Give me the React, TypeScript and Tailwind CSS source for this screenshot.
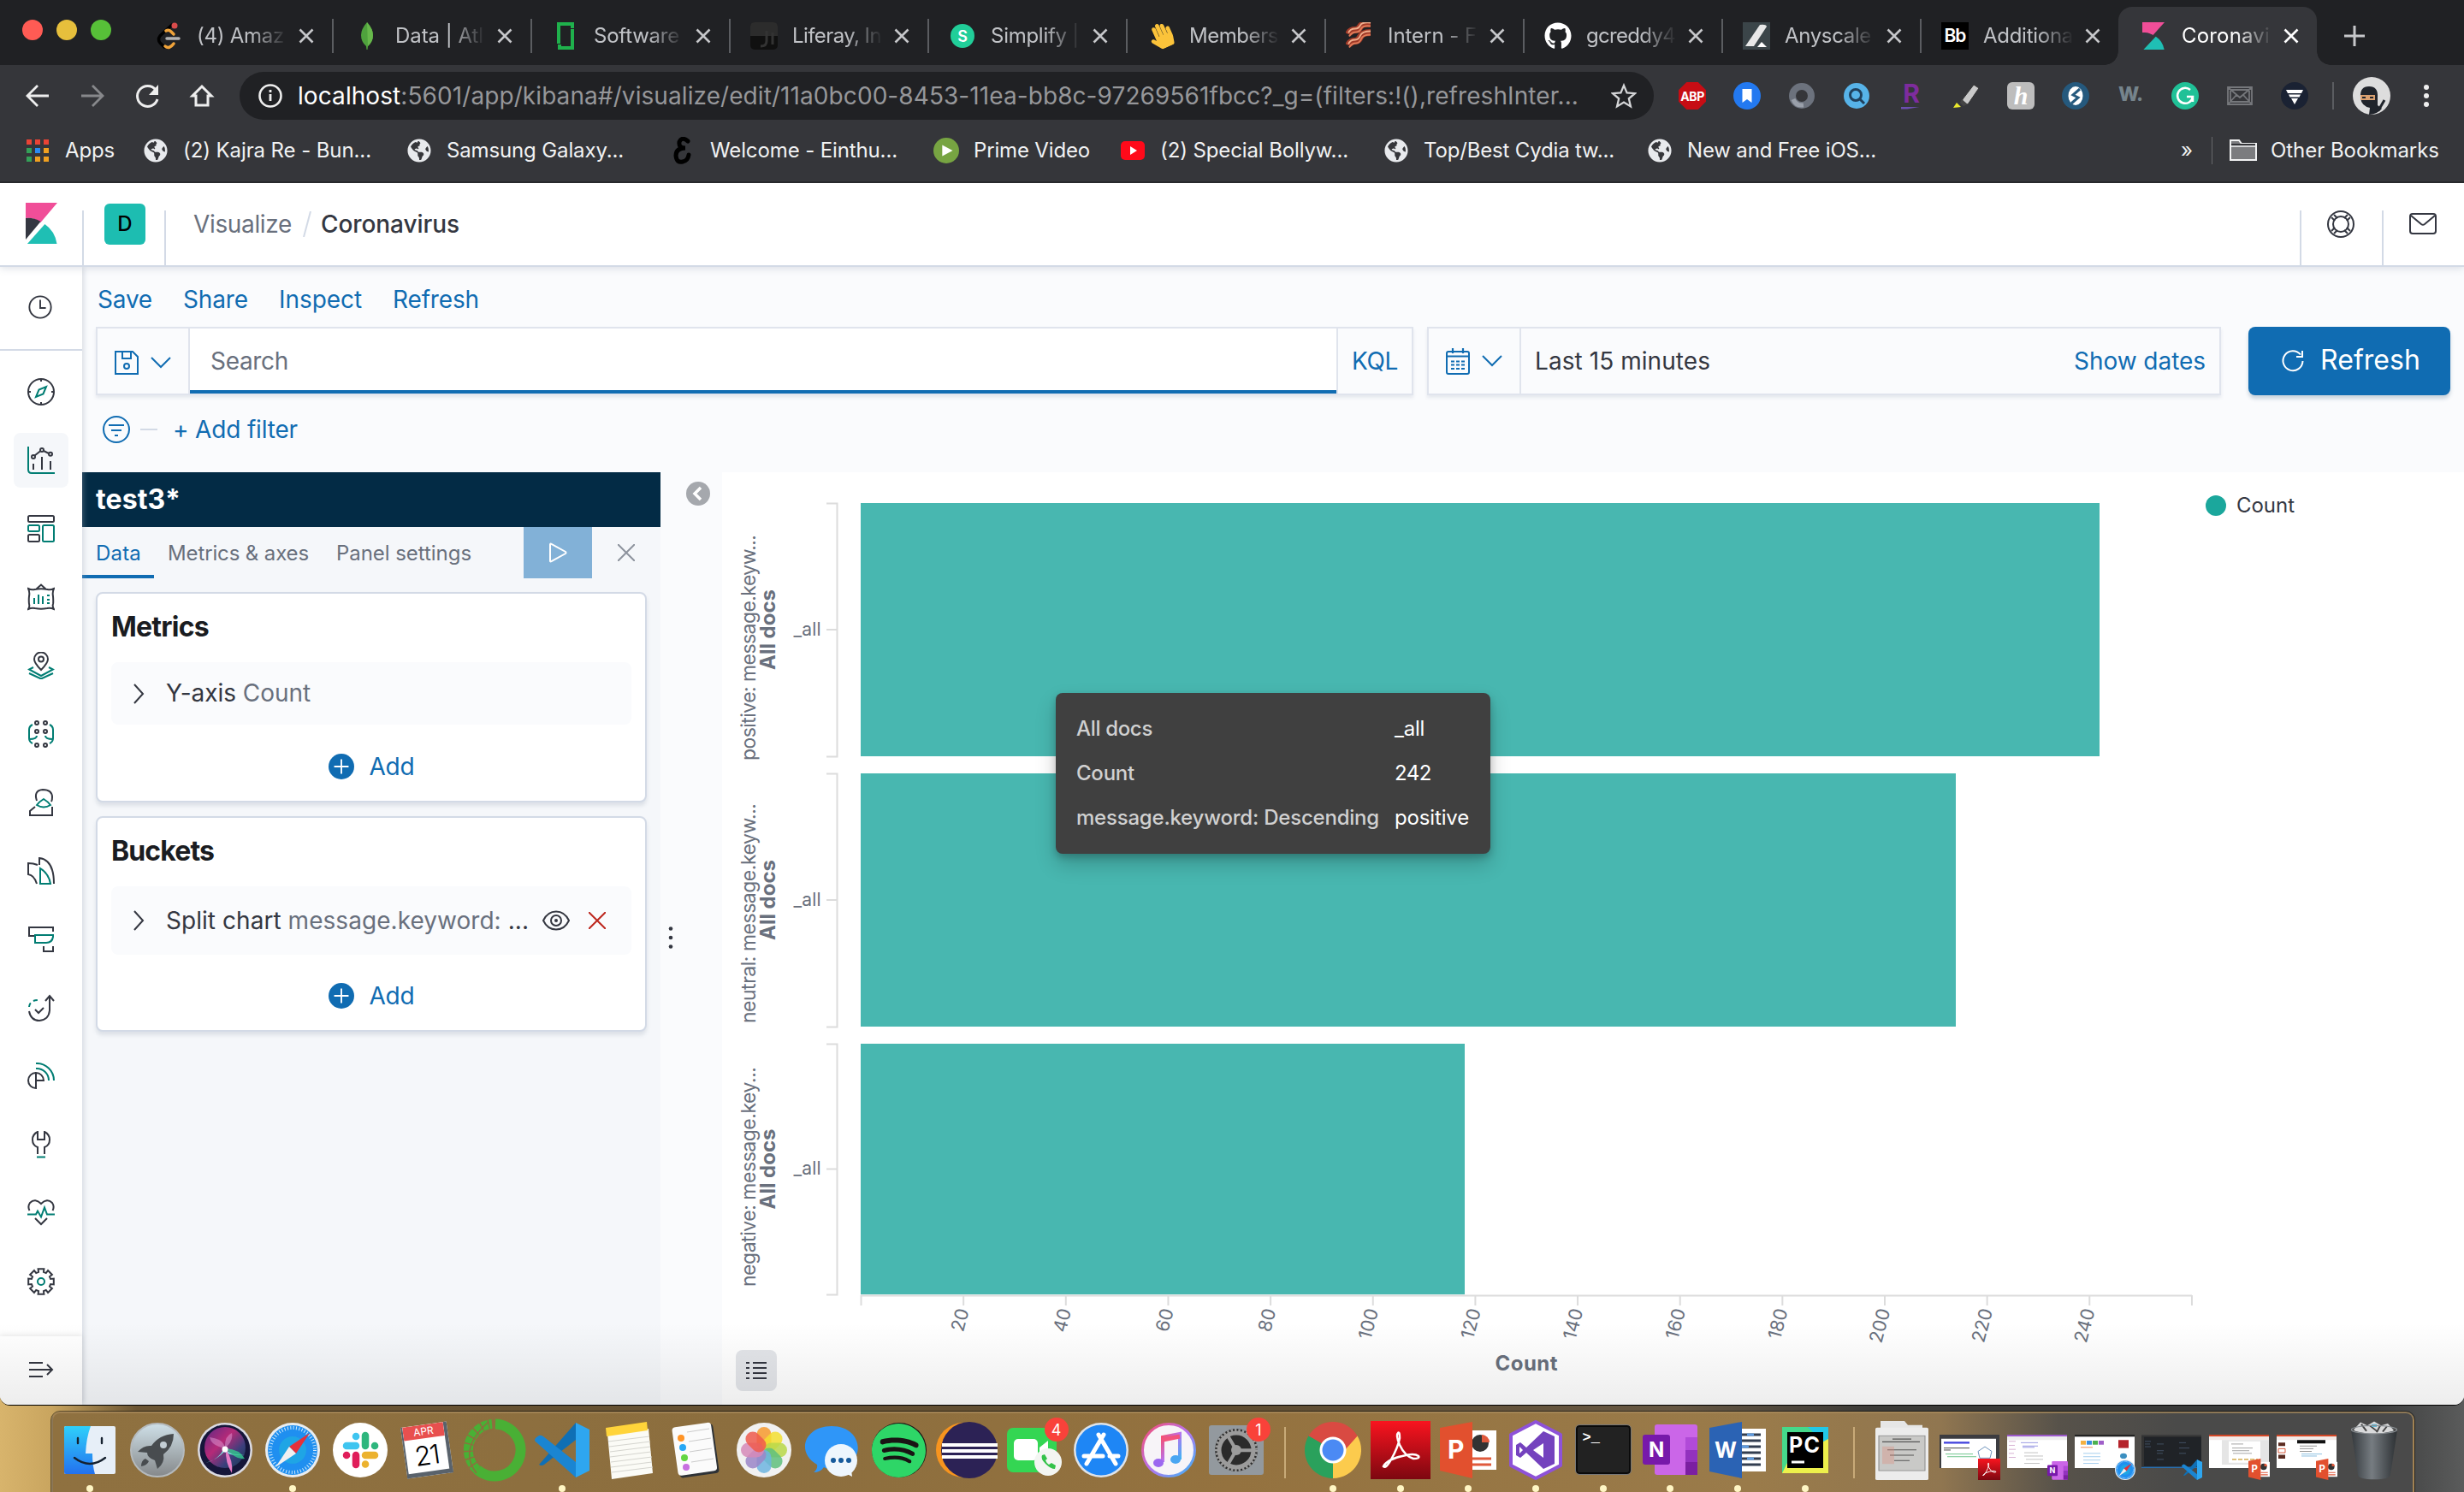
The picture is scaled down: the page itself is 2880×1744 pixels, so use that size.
import React, { useLayoutEffect, useRef, useState } from "react";
import { FaGithub, FaSpotify, FaHandPaper, FaGlobeAmericas } from "react-icons/fa";

type Kids = { children?: React.ReactNode };

/** Single-line label that tracks its letters so that it fills the given width. */
function Fit({ w, className = "", children }: Kids & { w: number; className?: string }) {
  const ref = useRef<HTMLSpanElement>(null);
  const [ls, setLs] = useState(0);
  useLayoutEffect(() => {
    const el = ref.current;
    if (!el) return;
    const n = (el.textContent || "").length || 1;
    setLs((w - el.getBoundingClientRect().width) / n);
  }, [w]);
  return (
    <span ref={ref} className={"inline-block whitespace-pre " + className} style={{ letterSpacing: ls }}>
      {children}
    </span>
  );
}

function Svg({ children, className = "size-8", vb = "0 0 32 32" }: Kids & { className?: string; vb?: string }) {
  return (
    <svg viewBox={vb} preserveAspectRatio="none" className={"shrink-0 " + className} fill="none">
      {children}
    </svg>
  );
}

/* ---------- browser chrome ---------- */

const KibanaMark = ({ className }: { className: string }) => (
  <Svg vb="0 0 38 48" className={className}>
    <path d="M0 0h38L18 23Q9 17 0 18Z" fill="#F04E98" />
    <path d="M0 18q9-1 18 4L0 43Z" fill="#343741" />
    <path d="M23 25Q35 33 37.500 48H2Z" fill="#1FBFB4" />
  </Svg>
);

const favicons: Record<string, React.ReactNode> = {
  leet: (
    <Svg>
      <path d="M20 3 6 16q-3 4 0 8l5 5" stroke="#000" strokeWidth="3.500" strokeLinecap="round" />
      <path d="M13 10q3-2 6 1l3 3M12 28q5 4 10-3" stroke="#F0A33A" strokeWidth="3.500" strokeLinecap="round" />
      <path d="M14 19h14" stroke="#B3B3B3" strokeWidth="3.500" strokeLinecap="round" />
      <circle cx="23" cy="4" r="3.500" fill="#D84B4B" />
    </Svg>
  ),
  mongo: (
    <Svg>
      <path d="M16 0q7 8 7 15 0 8-6 13l-.5 4h-1L15 28q-6-5-6-13 0-7 7-15Z" fill="#4FA23D" />
      <path d="M16 0q7 8 7 15 0 8-6 13Z" fill="#67B84B" />
    </Svg>
  ),
  soft: (
    <Svg>
      <path d="M8 25V2h16v5M24 8v22H9v-4" stroke="#1FB14C" strokeWidth="4" />
    </Svg>
  ),
  liferay: (
    <Svg>
      <rect width="32" height="32" rx="5" fill="#101010" />
      <path d="M0 5q0-5 5-5h22q5 0 5 5v11H0Z" fill="#2c2c2c" />
      <path d="M19 10v12q0 6-7 6M26 12v14" stroke="#333" strokeWidth="3" />
    </Svg>
  ),
  simplify: <div className="flex size-7 items-center justify-center rounded-full bg-[#21CE99] text-[18px] font-semibold text-white">S</div>,
  wave: <FaHandPaper className="h-[30px] w-7 -rotate-[24deg] text-[#FBC33A]" />,
  bacon: (
    <Svg>
      <path d="M3 14q2-5 8-5 4 0 6-4t12-3M3 27q2-5 8-5 4 0 6-5t12-5" stroke="#A03A28" strokeWidth="8" />
      <path d="M3 12.500q2-5 8-5 4 0 6-4t12-3M3 25.500q2-5 8-5 4 0 6-5t12-5" stroke="#F0AE8C" strokeWidth="2" />
      <path d="M4 16.500q3-5 8-5 4 0 6-4t11-3M4 29.500q3-5 8-5 4 0 6-5t11-5" stroke="#E07A58" strokeWidth="2" />
    </Svg>
  ),
  git: <FaGithub className="size-8 text-white" />,
  any: (
    <Svg>
      <rect width="32" height="32" fill="#3B4549" />
      <path d="M3 28 20 3q7-1 8 2L13 28Z" fill="#E8E8E8" />
      <path d="m22 23 6 6H17Z" fill="#fff" />
    </Svg>
  ),
  bb: <div className="flex size-8 items-center justify-center bg-black text-[21px] font-semibold tracking-tighter text-white">Bb</div>,
  kib: <KibanaMark className="h-8 w-[26px]" />,
};

const tabs: [string, string, number][] = [
  ["leet", "(4) Amaz", 102],
  ["mongo", "Data | Atl", 103],
  ["soft", "Software", 100],
  ["liferay", "Liferay, In", 104],
  ["simplify", "Simplify |", 103],
  ["wave", "Members", 104],
  ["bacon", "Intern - F", 104],
  ["git", "gcreddy4", 104],
  ["any", "Anyscale", 101],
  ["bb", "Additiona", 105],
];

const CloseX = ({ className = "text-[#c6c7ca]" }: { className?: string }) => (
  <Svg className={"size-[18px] " + className} vb="0 0 18 18">
    <path d="m1.500 1.500 15 15m0-15-15 15" stroke="currentColor" strokeWidth="2.600" />
  </Svg>
);

function Tab({ icon, title, w, active = false, last = false }: { icon: string; title: string; w: number; active?: boolean; last?: boolean }) {
  return (
    <div
      className={
        "relative flex h-[68px] w-[232px] shrink-0 items-center " +
        (active ? "rounded-t-[16px] bg-[#35363a]" : "")
      }
    >
      {active && (
        <>
          <div className="absolute bottom-0 -left-4 size-4 bg-[radial-gradient(circle_at_0_0,#202124_15.500px,#35363a_16px)]" />
          <div className="absolute -right-4 bottom-0 size-4 bg-[radial-gradient(circle_at_100%_0,#202124_15.500px,#35363a_16px)]" />
        </>
      )}
      <div className="ml-[25px] flex w-8 shrink-0 items-center justify-center">{favicons[icon]}</div>
      <div
        className={
          "ml-[17px] w-[106px] shrink-0 text-[24px] whitespace-nowrap [mask-image:linear-gradient(to_right,black_60%,transparent)] " +
          (active ? "text-white" : "text-[#c0c2c6]")
        }
      >
        <Fit w={w}>{title}</Fit>
      </div>
      <CloseX className={"ml-[13px] " + (active ? "text-white" : "text-[#c6c7ca]")} />
      {!active && !last && <div className="-mr-[2px] ml-auto h-10 w-[2px] bg-[#5b5d61]" />}
    </div>
  );
}

function TabStrip() {
  return (
    <div className="flex h-[76px] items-end bg-[#202124]">
      <div className="mb-[29px] ml-[26px] flex w-[130px] shrink-0 gap-4">
        <div className="size-6 rounded-full bg-[#FF5B54]" />
        <div className="size-6 rounded-full bg-[#E6BF3C]" />
        <div className="size-6 rounded-full bg-[#57C038]" />
      </div>
      {tabs.map(([icon, title, w], i) => (
        <Tab key={icon} icon={icon} title={title} w={w} last={i === tabs.length - 1} />
      ))}
      <Tab icon="kib" title="Coronavi" w={103} active />
      <Svg className="mb-[22px] ml-8 size-6" vb="0 0 24 24">
        <path d="M12 0v24M0 12h24" stroke="#c6c7ca" strokeWidth="3" />
      </Svg>
    </div>
  );
}

const extensions: React.ReactNode[] = [
  <div className="flex size-8 items-center justify-center bg-[#C70D14] text-[14px] font-bold tracking-tight text-white [clip-path:polygon(29%_0,71%_0,100%_29%,100%_71%,71%_100%,29%_100%,0_71%,0_29%)]">ABP</div>,
  <Svg>
    <circle cx="16" cy="16" r="16" fill="#2379F0" />
    <path d="M10.500 8h11v16L16 20l-5.500 4Z" fill="#fff" />
  </Svg>,
  <Svg>
    <circle cx="16" cy="16" r="11" stroke="#6c727d" strokeWidth="8" />
    <path d="M6 20q3 8 12 7" stroke="#9aa0aa" strokeWidth="5" />
  </Svg>,
  <Svg>
    <circle cx="16" cy="16" r="15" fill="#57B3E8" />
    <circle cx="15" cy="15" r="6.500" stroke="#20405c" strokeWidth="3" />
    <path d="m20 20 5 5" stroke="#20405c" strokeWidth="3" />
  </Svg>,
  <div className="flex size-8 flex-col items-center justify-center">
    <span className="text-[30px] leading-[25px] font-bold text-[#7E2C9E]">R</span>
    <span className="mt-[3px] h-[3px] w-6 bg-[#6b4fb0] [clip-path:polygon(0_0,100%_0,30%_100%,0_100%)]" />
  </div>,
  <Svg>
    <path d="M12 20 25 3l6 4-13 19-7-1Z" fill="#c9c9c9" stroke="#333" strokeWidth="1" />
    <path d="m11 20 7 6-5 2-4-4Z" fill="#444" />
    <path d="m1 30 4-6 5 5Z" fill="#E9E82D" />
  </Svg>,
  <div className="flex size-8 items-center justify-center rounded-[6px] bg-[#bdbdbd] font-['Liberation_Serif',serif] text-[30px] leading-none font-bold text-white italic">h</div>,
  <Svg>
    <circle cx="16" cy="16" r="16" fill="#25597d" />
    <ellipse cx="16" cy="16" rx="8.500" ry="11" fill="#fff" />
    <path d="M21 8 13 15l6 3-8 7" stroke="#25597d" strokeWidth="3" />
  </Svg>,
  <span className="mb-1 text-[23px] leading-none font-extrabold tracking-tighter text-[#75848c]">W.</span>,
  <Svg>
    <circle cx="16" cy="16" r="16" fill="#20C197" />
    <path d="M22 9a9 9 0 1 0 3 8h-7M25 17v6" stroke="#fff" strokeWidth="2.500" />
  </Svg>,
  <Svg>
    <path d="M2 6h28v20H2ZM2 6l14 12L30 6M2 26l10-11m18 11L20 15M5 9h22v14H5Z" stroke="#75777b" strokeWidth="1.800" />
  </Svg>,
  <Svg>
    <circle cx="16" cy="16" r="16" fill="#1a2233" />
    <path d="M6 9h20l-2 4H8ZM9 14.500h14l-1.500 3h-11ZM12 19h8l-4 7Z" fill="#fff" />
  </Svg>,
];

function Toolbar() {
  return (
    <div className="flex h-[72px] items-center bg-[#35363a]">
      <Svg className="ml-[28px] size-8">
        <path d="M29 16H4M16 4 4 16l12 12" stroke="#eee" strokeWidth="2.800" />
      </Svg>
      <Svg className="ml-8 size-8">
        <path d="M3 16h25M16 4l12 12-12 12" stroke="#87888b" strokeWidth="2.800" />
      </Svg>
      <Svg className="ml-8 size-8">
        <path d="M26 9a12 12 0 1 0 2 11" stroke="#eee" strokeWidth="3" />
        <path d="M29 3v12H18Z" fill="#eee" />
      </Svg>
      <Svg className="ml-8 size-8">
        <path d="M16 5 5 16h4v11h14V16h4Z" stroke="#eee" strokeWidth="3" />
      </Svg>
      <div className="ml-7 flex h-14 w-[1653px] shrink-0 items-center rounded-full bg-[#202124]">
        <Svg className="ml-[22px] size-[28px]" vb="0 0 28 28">
          <circle cx="14" cy="14" r="12.500" stroke="#eee" strokeWidth="2.600" />
          <path d="M14 12v8M14 7v3" stroke="#eee" strokeWidth="2.800" />
        </Svg>
        <div className="ml-[18px] w-[1497px] text-[28px] text-[#96979a]">
          <Fit w={1497}>
            <span className="text-white">localhost</span>:5601/app/kibana#/visualize/edit/11a0bc00-8453-11ea-bb8c-97269561fbcc?_g=(filters:!(),refreshInter...
          </Fit>
        </div>
        <Svg className="ml-[38px] size-[30px]">
          <path d="m16 3 3.800 9.200 10 .8-7.600 6.500 2.300 9.700L16 24l-8.500 5.200 2.300-9.700L2.200 13l10-.8Z" stroke="#d5d6d8" strokeWidth="2.400" />
        </Svg>
      </div>
      <div className="ml-[29px] flex shrink-0 gap-8">
        {extensions.map((e, i) => (
          <div key={i} className="flex size-8 items-center justify-center">
            {e}
          </div>
        ))}
      </div>
      <div className="ml-[28px] h-8 w-[2px] bg-[#5b5d61]" />
      <Svg className="ml-[22px] size-11" vb="0 0 44 44">
        <circle cx="22" cy="22" r="22" fill="#ddd" />
        <path d="M9 24q-1-13 10-13 11 0 10 13v9l5 4q-6 7-15 7l1-8q-10-2-11-12Z" fill="#20242b" />
        <path d="M9 21h17v6H9Z" fill="#d9a070" />
        <path d="M11 24h4m5 0h4" stroke="#20242b" strokeWidth="2" />
        <path d="m37 27-7 12" stroke="#20242b" strokeWidth="3" />
      </Svg>
      <Svg className="ml-[38px] h-7 w-2" vb="0 0 8 28">
        <g fill="#eee">
          <circle cx="4" cy="4" r="3" />
          <circle cx="4" cy="14" r="3" />
          <circle cx="4" cy="24" r="3" />
        </g>
      </Svg>
    </div>
  );
}

const Globe = () => <FaGlobeAmericas className="size-7 shrink-0 text-[#e8eaed]" />;

const Mark = ({ icon, text, w, className }: { icon: React.ReactNode; text: string; w: number; className: string }) => (
  <div className={"flex shrink-0 items-center " + className}>
    <div className="mr-[18px] flex w-7 justify-center">{icon}</div>
    <Fit w={w}>{text}</Fit>
  </div>
);

function BookmarksBar() {
  const c = ["#EA4335", "#EA4335", "#EA4335", "#34A058", "#2A8BF2", "#F0A020", "#34A058", "#F0A020", "#F0A020"];
  return (
    <div className="flex h-[66px] items-center border-b-2 border-[#28292c] bg-[#35363a] pb-[8px] text-[24px] text-[#f1f2f3]">
      <Svg className="ml-[31px] size-[26px]" vb="0 0 26 26">
        {c.map((f, i) => (
          <rect key={i} x={(i % 3) * 10} y={Math.floor(i / 3) * 10} width="6" height="6" fill={f} />
        ))}
      </Svg>
      <div className="ml-[19px] w-[58px]"><Fit w={58}>Apps</Fit></div>
      <Mark className="ml-[34px]" icon={<Globe />} text="(2) Kajra Re - Bun..." w={220} />
      <Mark className="ml-[42px]" icon={<Globe />} text="Samsung Galaxy..." w={207} />
      <Mark
        className="ml-[55px]"
        icon={
          <Svg className="size-8">
            <path d="M22 5Q15-1 12 6q-1 7 7 7-11 0-11 9 1 9 8 7 6-1 7-8" stroke="#000" strokeWidth="5" strokeLinecap="round" />
          </Svg>
        }
        text="Welcome - Einthu..."
        w={219}
      />
      <Mark
        className="ml-[43px]"
        icon={
          <Svg className="size-[30px]">
            <circle cx="16" cy="16" r="16" fill="#77A442" />
            <path d="m11 9 13 7-13 7Z" fill="#fff" />
          </Svg>
        }
        text="Prime Video"
        w={136}
      />
      <Mark
        className="ml-[36px]"
        icon={
          <Svg className="h-[22px] w-7" vb="0 0 28 22">
            <rect width="28" height="22" rx="5" fill="#FF0A1A" />
            <path d="m11 6 8 5-8 5Z" fill="#fff" />
          </Svg>
        }
        text="(2) Special Bollyw..."
        w={220}
      />
      <Mark className="ml-[42px]" icon={<Globe />} text="Top/Best Cydia tw..." w={223} />
      <Mark className="ml-[39px]" icon={<Globe />} text="New and Free iOS..." w={221} />
      <div className="ml-auto flex items-center">
        <span className="text-[24px]">»</span>
        <div className="ml-[22px] h-8 w-px bg-[#66676a]" />
        <Svg className="ml-5 h-7 w-8" vb="0 0 32 28">
          <path d="M1 2h10l3 4h17v19H1Z" fill="#7b7c7f" stroke="#f1f2f3" strokeWidth="2" />
          <path d="M2 7h28" stroke="#35363a" strokeWidth="2" />
          <path d="M1 9h30" stroke="#f1f2f3" strokeWidth="1.500" />
        </Svg>
        <div className="mr-[29px] ml-4"><Fit w={197}>Other Bookmarks</Fit></div>
      </div>
    </div>
  );
}

/* ---------- Kibana ---------- */

function Header() {
  return (
    <div className="relative z-10 flex h-[98px] shrink-0 items-center border-b-2 border-[#d3dae6] bg-white text-[28px] shadow-[0_2px_8px_rgba(152,162,179,0.3)]">
      <KibanaMark className="mb-[3px] ml-[30px] h-12 w-[37px]" />
      <div className="ml-[29px] h-16 w-[2px] self-end bg-[#d3dae6]" />
      <div className="ml-6 flex size-12 items-center justify-center rounded-[6px] bg-[#1DBDB1] text-[24px] font-medium text-black">D</div>
      <div className="ml-[22px] h-16 w-[2px] self-end bg-[#d3dae6]" />
      <div className="ml-[32px]"><Fit w={115} className="text-[#69707d]">Visualize</Fit></div>
      <Svg className="ml-[12px] h-[30px] w-3" vb="0 0 12 30">
        <path d="M10 0 2 30" stroke="#d3dae6" strokeWidth="2" />
      </Svg>
      <div className="ml-[10px]"><Fit w={162} className="font-medium text-[#343741]">Coronavirus</Fit></div>
      <div className="ml-auto h-16 w-[2px] self-end bg-[#d3dae6]" />
      <Svg className="ml-[30px] size-8">
        <g stroke="#343741" strokeWidth="2">
          <circle cx="16" cy="16" r="15" />
          <circle cx="16" cy="16" r="9" />
          <path d="m5 8 4 4M8 5l4 4M24 5l-4 4m7-1-4 4M5 24l4-4m-1 7 4-4m12 4-4-4m7 1-4-4" />
        </g>
      </Svg>
      <div className="ml-[32px] h-16 w-[2px] self-end bg-[#d3dae6]" />
      <Svg className="mr-8 ml-[30px] h-[26px] w-8" vb="0 0 32 26">
        <g stroke="#343741" strokeWidth="2">
          <rect x="1" y="1" width="30" height="23" rx="3" />
          <path d="m2 3 12 10q2 1.500 4 0L30 3" />
        </g>
      </Svg>
    </div>
  );
}

const D = "#343741";
const G = "#017D73";

const gearPath = Array.from({ length: 8 }, (_, i) => {
  const p = (r: number, deg: number) => {
    const a = ((i * 45 + deg - 90) * Math.PI) / 180;
    return `${(16 + r * Math.cos(a)).toFixed(2)} ${(16 + r * Math.sin(a)).toFixed(2)}`;
  };
  return `${p(11.5, -15)}L${p(15.2, -13)}L${p(15.2, 13)}L${p(11.5, 15)}`;
}).join("L");

const navIcons: React.ReactNode[] = [
  <>
    <circle cx="16" cy="16" r="15" stroke={D} />
    <path d="M16 1v3m0 24v3M1 16h3m24 0h3" stroke={D} />
    <path d="m22 10-3.500 8.500L10 22l3.500-8.500Z" stroke={G} />
  </>,
  <>
    <path d="M1 0v27q0 4 4 4h27" stroke={G} />
    <g stroke={D}>
      <circle cx="7" cy="12" r="2" />
      <circle cx="17" cy="4" r="2" />
      <circle cx="27" cy="8.700" r="2" />
      <path d="m8.500 10.500 7-5.500m3.500 0 6 3M7 20v7m10-15v15m10-10v10" />
    </g>
  </>,
  <>
    <rect x="1" y="1" width="30" height="7" rx="1.500" stroke={D} />
    <rect x="1" y="12" width="13" height="7" rx="1.500" stroke={G} />
    <rect x="1" y="23" width="13" height="8" rx="1.500" stroke={D} />
    <rect x="18" y="12" width="13" height="19" rx="1.500" stroke={G} />
  </>,
  <>
    <path d="m10 7 6-5.500L22 7M1 6q4 2 7.500 1 7.500-1.500 15 0Q27 8 31 6q-2 4-1 9 .5 7 0 9-1 3 1 6-4-2-8-1-7 1.500-14 0-4-1-8 1 2-3 1-6-.5-5 0-9 1-5-1-9Z" stroke={D} />
    <path d="M8 17v7m5-11v11m5-9v9m5-10h3m-3 5h3m-3 4h3" stroke={G} />
  </>,
  <>
    <path d="m7 18-5 2.500L16 28l14-7.500-5-2.500M2 25l14 6.500L30 25" stroke={G} />
    <path d="M16 21Q8 13 8 8.500a8 8 0 0 1 16 0Q24 13 16 21Z" stroke={D} />
    <circle cx="16" cy="8.500" r="3" stroke={D} />
  </>,
  <>
    <g stroke={D}>
      <circle cx="11" cy="3" r="2" />
      <circle cx="21" cy="3" r="2" />
      <circle cx="11" cy="13" r="2" />
      <circle cx="21" cy="13" r="2" />
      <circle cx="11" cy="29" r="2" />
      <circle cx="21" cy="29" r="2" />
    </g>
    <path d="M6 5Q2 7 2 11v10q0 4 4 6m-4-5q9 0 9-4M26 5q4 2 4 6v10q0 4-4 6m4-5q-9 0-9-4" stroke={G} />
  </>,
  <>
    <path d="M11 14Q7 2 18 1q11 0 11 9 0 3-1 5M9 21l-6 5v5h26V21" stroke={D} />
    <path d="M19 12q5 3 8 7-8 5-16 0 3-4 8-7Z" stroke={G} />
  </>,
  <>
    <path d="M12 9q-5-2-11-2v13q7 1 10 11M14 9V1q17 2 17 30" stroke={D} />
    <path d="M15 13q10 6 12 18H15Z" stroke={G} />
  </>,
  <>
    <path d="M30 7V2H2v10h6M19 24v6h11v-6" stroke={D} />
    <path d="M9 11h21v2q-1 7-8 7H9Z" stroke={G} />
  </>,
  <>
    <path d="M2 20q2 11 12 11 11-1 12-12V2m-5 6 5-6 5 6M9 18l4 4 6-6" stroke={D} />
    <path d="M2 15q1-8 11-8" stroke={G} strokeDasharray="5 4" />
  </>,
  <>
    <path d="M10 12a9 9 0 0 0 0 18V12a9 9 0 0 1 9 9h-9" stroke={D} />
    <path d="M10 1a20 20 0 0 1 21 20M10 7a14 14 0 0 1 15 14" stroke={G} />
  </>,
  <>
    <path d="M12 27v-8Q6 17 6 10q0-6 6-9v9h8V1q6 3 6 9 0 7-6 9v8" stroke={D} />
    <path d="M11 30.500h10" stroke={G} />
  </>,
  <>
    <path d="M2.500 13Q0 8 3 4q6-6 13 1 7-7 13-1 3 4 .5 9M9 22l7 7 7-7" stroke={D} />
    <path d="M0 17.500h10l2-4 4 7 4-11 3 8h9" stroke={G} />
  </>,
  <>
    <path d={`M${gearPath}Z`} stroke={D} />
    <circle cx="16" cy="16" r="4" stroke={G} />
  </>,
];

function SideNav() {
  return (
    <div className="relative z-[5] flex w-24 shrink-0 flex-col bg-white shadow-[2px_0_6px_rgba(152,162,179,0.35)]">
      <div className="flex h-[98px] shrink-0 items-center border-b-2 border-[#d3dae6]">
        <Svg className="mb-[2px] ml-8 size-[30px]">
          <circle cx="16" cy="16" r="13.500" stroke={D} strokeWidth="2" />
          <path d="M16 7v10h7" stroke={D} strokeWidth="2" />
        </Svg>
      </div>
      <div className="flex grow flex-col items-center gap-4 pt-4">
        {navIcons.map((ic, i) => (
          <div key={i} className={"flex size-16 shrink-0 items-center justify-center rounded-lg " + (i === 1 ? "bg-[#f5f7fa]" : "")}>
            <Svg>
              <g strokeWidth="2">{ic}</g>
            </Svg>
          </div>
        ))}
      </div>
      <div className="flex h-20 shrink-0 items-center justify-center pb-[2px] shadow-[0_-2px_6px_rgba(0,0,0,0.08)]">
        <Svg>
          <path d="M2 8h16M2 16h27M2 24h16m5-14 6 6-6 6" stroke={D} strokeWidth="2" />
        </Svg>
      </div>
    </div>
  );
}

const Chevron = ({ className = "" }: { className?: string }) => (
  <Svg className={"h-[14px] w-6 " + className} vb="0 0 24 14">
    <path d="m1 1 11 11L23 1" stroke="currentColor" strokeWidth="2" />
  </Svg>
);

function QueryBar() {
  return (
    <div className="ml-4 flex h-20 items-stretch text-[28px]">
      <div className="flex w-[1540px] border-2 border-[#e0e4ed] shadow-[0_3px_4px_rgba(152,162,179,0.2)]">
        <div className="flex w-[108px] items-center border-r-2 border-[#e0e4ed] pt-[3px] text-[#106cb2]">
          <Svg className="ml-5 size-7" vb="0 0 28 28">
            <path d="M1 1h20l6 6v20H1ZM9 1v8h10V1" stroke="currentColor" strokeWidth="2" />
            <circle cx="14" cy="18" r="3" stroke="currentColor" strokeWidth="2" />
          </Svg>
          <Chevron className="ml-[14px]" />
        </div>
        <div className="flex w-[1340px] items-center border-b-4 border-[#106cb2] bg-white pt-1 pl-6 text-[#69707d]">
          <Fit w={91}>Search</Fit>
        </div>
        <div className="flex grow items-center border-l-2 border-[#e0e4ed] pl-4 text-[#106cb2]"><Fit w={54}>KQL</Fit></div>
      </div>
      <div className="ml-4 flex w-[928px] items-center border-2 border-[#e0e4ed] shadow-[0_3px_4px_rgba(152,162,179,0.2)]">
        <Svg className="ml-5 h-[31px] w-7 text-[#106cb2]" vb="0 0 28 31">
          <rect x="1" y="4" width="26" height="26" rx="2" stroke="currentColor" strokeWidth="2" />
          <path d="M1 9.500h26M8 0v6M20 0v6M6 15.500h4m2 0h4m2 0h4M6 19.500h4m2 0h4m2 0h4M6 24h4m2 0h4m2 0h4" stroke="currentColor" strokeWidth="2.200" />
        </Svg>
        <Chevron className="ml-[14px] text-[#106cb2]" />
        <div className="ml-5 h-full w-[2px] bg-[#e0e4ed]" />
        <div className="ml-[16px]"><Fit w={205} className="text-[#343741]">Last 15 minutes</Fit></div>
        <div className="mr-4 ml-auto"><Fit w={154} className="text-[#106cb2]">Show dates</Fit></div>
      </div>
      <div className="ml-8 flex w-[236px] items-center rounded-lg bg-[#106cb2] text-[32px] text-white shadow-[0_4px_4px_rgba(54,97,126,0.25)]">
        <Svg className="ml-[38px] size-7" vb="0 0 28 28">
          <path d="M23 6.500A11.500 11.500 0 1 0 25.500 14M25 2v7h-7" stroke="currentColor" strokeWidth="2" />
        </Svg>
        <div className="ml-[18px] pb-[2px]"><Fit w={117}>Refresh</Fit></div>
      </div>
    </div>
  );
}

const Arrow = () => (
  <Svg className="h-6 w-[14px]" vb="0 0 14 24">
    <path d="m2 1 10 11L2 23" stroke={D} strokeWidth="2" />
  </Svg>
);

const Add = () => (
  <div className="flex items-center justify-center text-[28px] text-[#106cb2]">
    <Svg className="size-[30px]">
      <circle cx="16" cy="16" r="16" fill="currentColor" />
      <path d="M16 7v18M7 16h18" stroke="#fff" strokeWidth="2" />
    </Svg>
    <Fit w={53} className="ml-[18px]">Add</Fit>
  </div>
);

function Editor() {
  return (
    <div className="flex w-[676px] shrink-0 flex-col bg-[#f5f7fa]">
      <div className="flex h-16 shrink-0 items-center bg-[#032b45] pl-4 text-[32px] font-bold text-white"><Fit w={99}>test3*</Fit></div>
      <div className="flex h-[60px] shrink-0 items-stretch text-[24px] text-[#69707d]">
        <div className="flex w-[84px] items-center border-b-4 border-[#106cb2] pt-[6px] pl-4 text-[#106cb2]"><Fit w={53}>Data</Fit></div>
        <div className="flex items-center pt-[2px] pl-4"><Fit w={165}>Metrics & axes</Fit></div>
        <div className="flex items-center pt-[2px] pl-8"><Fit w={158}>Panel settings</Fit></div>
        <div className="ml-auto flex w-20 items-center justify-center bg-[#82b1d7]">
          <Svg className="size-6" vb="0 0 24 24">
            <path d="M3 2.500v19q0 1.500 1.500.7L21 13q1-1 0-2L4.500 1.800Q3 1 3 2.500Z" stroke="#fff" strokeWidth="2" />
          </Svg>
        </div>
        <div className="flex w-20 items-center justify-center">
          <Svg className="size-5" vb="0 0 20 20">
            <path d="m0 0 20 20M20 0 0 20" stroke="#8d939d" strokeWidth="2" />
          </Svg>
        </div>
      </div>
      <div className="mx-4 mt-4 h-[246px] shrink-0 rounded-lg border-2 border-[#d3dae6] bg-white px-4 pt-4 shadow-[0_4px_4px_rgba(152,162,179,0.25)]">
        <div className="flex h-[46px] items-center text-[32px] font-bold text-[#1a1c21]"><Fit w={114}>Metrics</Fit></div>
        <div className="mt-[18px] flex h-[73px] items-center rounded-lg bg-[#fafbfd] pl-[25px] text-[28px]">
          <Arrow />
          <span className="ml-[25px] pb-[2px]"><Fit w={169}><span className="text-[#343741]">Y-axis</span> <span className="text-[#69707d]">Count</span></Fit></span>
        </div>
        <div className="mt-[28px]"><Add /></div>
      </div>
      <div className="mx-4 mt-4 h-[252px] shrink-0 rounded-lg border-2 border-[#d3dae6] bg-white px-4 pt-4 shadow-[0_4px_4px_rgba(152,162,179,0.25)]">
        <div className="flex h-[46px] items-center text-[32px] font-bold text-[#1a1c21]"><Fit w={120}>Buckets</Fit></div>
        <div className="mt-[18px] flex h-20 items-center rounded-lg bg-[#fafbfd] pl-[25px] text-[28px]">
          <Arrow />
          <span className="ml-[25px]"><Fit w={424}><span className="text-[#343741]">Split chart</span> <span className="text-[#69707d]">message.keyword:</span> <span className="text-[#343741]">...</span></Fit></span>
          <Svg className="ml-[16px] size-8">
            <path d="M1 16Q6 5.500 16 5.500T31 16Q26 26.500 16 26.500T1 16Z" stroke={D} strokeWidth="2" />
            <circle cx="16" cy="16" r="6" stroke={D} strokeWidth="2" />
            <circle cx="16" cy="16" r="2" fill={D} />
          </Svg>
          <Svg className="ml-[22px] size-5" vb="0 0 20 20">
            <path d="m0 0 20 20M20 0 0 20" stroke="#BD271E" strokeWidth="2" />
          </Svg>
        </div>
        <div className="mt-[27px]"><Add /></div>
      </div>
    </div>
  );
}

/* Chart coordinates: origin is the white panel's corner, at 844 x 552 of the page. */
const rows = [
  { top: 36, h: 296, w: 1448, label: "positive: message.keyw...", from: 337, len: 264 },
  { top: 352, h: 296, w: 1280, label: "neutral: message.keyw...", from: 644, len: 257 },
  { top: 668, h: 293, w: 706, label: "negative: message.key...", from: 952, len: 257 },
];

function Chart() {
  return (
    <div className="relative grow bg-white">
      <svg viewBox="0 0 2036 1090" className="block h-[1090px] w-[2036px]" fontFamily="Inter, sans-serif" fill="#69707d">
        {rows.map((r) => {
          const mid = r.top + r.h / 2;
          return (
            <g key={r.label}>
              <rect x="162" y={r.top} width={r.w} height={r.h} fill="#48B7B0" />
              <path d={`M122 ${r.top + 0.5}h12.500v${r.h}h-12.500M122 ${mid}h12`} stroke="#dcdcdc" strokeWidth="2" fill="none" />
              <text x="115.500" y={mid + 6.5} fontSize="21" textAnchor="end" textLength="32">_all</text>
              <text transform={`translate(${38.5} ${r.from}) rotate(-90)`} fontSize="23" textLength={r.len}>{r.label}</text>
              <text transform={`translate(${62} ${mid + 47}) rotate(-90)`} fontSize="24" fontWeight="700" textLength="94" lengthAdjust="spacingAndGlyphs">All docs</text>
            </g>
          );
        })}
        <path d="M162 962.500h1556" stroke="#dcdcdc" strokeWidth="2" />
        {Array.from({ length: 14 }, (_, i) => (
          <g key={i}>
            <path d={`M${162.5 + i * 119.65} 962v12`} stroke="#dcdcdc" strokeWidth="2" />
            {i > 0 && i < 13 && (
              <text transform={`translate(${162 + i * 119.65 + 7} 980) rotate(-75)`} fontSize="21.500" textAnchor="end">{i * 20}</text>
            )}
          </g>
        ))}
        <text x="940" y="1050" fontSize="24" fontWeight="700" textAnchor="middle" textLength="73">Count</text>
      </svg>
      <div className="absolute top-[21px] left-[1734px] flex items-center text-[24px] text-[#343741]">
        <div className="mr-3 size-6 rounded-full bg-[#1BA79C]" />
        <Fit w={68}>Count</Fit>
      </div>
      <div className="absolute top-[1026px] left-4 flex size-12 items-center justify-center rounded-lg bg-[#e3e5e9]">
        <Svg className="h-5 w-6" vb="0 0 24 20">
          <path d="M0 1h4m4 0h16M0 7h4m4 0h16M0 13h4m4 0h16M0 19h4m4 0h16" stroke={D} strokeWidth="2" />
        </Svg>
      </div>
      <div className="absolute top-[258px] left-[390px] grid h-[188px] w-[508px] grid-cols-[372px_1fr] content-center gap-y-[22px] rounded-lg bg-[#404040] pl-6 text-[24px] leading-[30px] text-[#d0d0d0] shadow-[0_12px_24px_rgba(0,0,0,0.2),0_4px_8px_rgba(0,0,0,0.2)]">
        <Fit w={89} className="justify-self-start font-medium">All docs</Fit>
        <Fit w={35} className="justify-self-start text-white">_all</Fit>
        <Fit w={68} className="justify-self-start font-medium">Count</Fit>
        <Fit w={43} className="justify-self-start text-white">242</Fit>
        <Fit w={354} className="justify-self-start font-medium">message.keyword: Descending</Fit>
        <Fit w={87} className="justify-self-start text-white">positive</Fit>
      </div>
    </div>
  );
}

function Kibana() {
  return (
    <div className="flex grow flex-col overflow-hidden bg-[#fafbfd]">
      <Header />
      <div className="flex grow">
        <SideNav />
        <div className="flex grow flex-col">
          <div className="flex h-[70px] items-center pt-[6px] pl-[18px] text-[28px] text-[#106cb2]">
            <div className="w-[100px]"><Fit w={64}>Save</Fit></div>
            <div className="w-[112px]"><Fit w={76}>Share</Fit></div>
            <div className="w-[133px]"><Fit w={97}>Inspect</Fit></div>
            <Fit w={101}>Refresh</Fit>
          </div>
          <QueryBar />
          <div className="flex h-[90px] items-start pt-6 pl-6">
            <div className="flex items-center text-[28px] leading-8 text-[#106cb2]">
              <Svg>
                <circle cx="16" cy="16" r="15" stroke="currentColor" strokeWidth="2" />
                <path d="M7 11h18M10 17h12m-8 6h4" stroke="currentColor" strokeWidth="2" />
              </Svg>
              <div className="ml-3 h-[2px] w-5 bg-[#d3dae6]" />
              <div className="ml-[18px]"><Fit w={146}>+ Add filter</Fit></div>
            </div>
          </div>
          <div className="flex grow">
            <Editor />
            <div className="relative w-[72px] shrink-0">
              <Svg className="absolute top-[11px] left-[30px] size-7" vb="0 0 28 28">
                <circle cx="14" cy="14" r="14" fill="#a5a8ad" />
                <path d="m17 7-7 7 7 7" stroke="#fff" strokeWidth="3.500" />
              </Svg>
              <Svg className="absolute top-[529px] left-[8px] h-8 w-2" vb="0 0 8 32">
                <g fill={D}>
                  <circle cx="4" cy="4.500" r="2.300" />
                  <circle cx="4" cy="15" r="2.300" />
                  <circle cx="4" cy="25.500" r="2.300" />
                </g>
              </Svg>
            </div>
            <Chart />
          </div>
        </div>
      </div>
    </div>
  );
}

/* ---------- dock ---------- */

const Safari = ({ className = "size-16" }: { className?: string }) => (
  <Svg vb="0 0 64 64" className={className}>
    <circle cx="32" cy="32" r="32" fill="#e9edf0" />
    <circle cx="32" cy="32" r="29" fill="#1f8ff0" />
    <circle cx="32" cy="32" r="16" fill="#20aee0" opacity=".7" />
    <circle cx="32" cy="32" r="26" stroke="#cfe8fb" strokeWidth="4" strokeDasharray="1 2.400" />
    <path d="M52 12 36 36l-8-8Z" fill="#E5303A" />
    <path d="m12 52 16-24 8 8Z" fill="#f0f0f0" />
  </Svg>
);
const VsCode = ({ className = "size-16" }: { className?: string }) => (
  <Svg vb="0 0 64 64" className={className}>
    <path d="M5 49 48 0v20L11 49q-3 2-6 0Z" fill="#0f6fb5" />
    <path d="M0 20q0-2 5-5 2-1 5 1l38 30v18L2 23Q0 22 0 20Z" fill="#1a85d2" />
    <path d="m48 0 16 8v48l-16 8Z" fill="#2ea6f0" />
  </Svg>
);
const Acrobat = ({ className = "h-[68px] w-[70px]" }: { className?: string }) => (
  <Svg vb="0 0 70 68" className={className}>
    <defs>
      <linearGradient id="acro" x1="0" y1="0" x2="0" y2="1">
        <stop stopColor="#F9141F" />
        <stop offset="1" stopColor="#7d0710" />
      </linearGradient>
    </defs>
    <rect width="70" height="68" fill="url(#acro)" />
    <path d="M15 53q3 3 9-8 8-14 10-25 0-8-2-6-3 2 2 14 6 13 16 16 8 0 6-3-5-4-19 0-18 4-22 12Z" stroke="#fff" strokeWidth="2.500" />
  </Svg>
);
const PowerPoint = ({ className = "size-[66px]" }: { className?: string }) => (
  <Svg vb="0 0 66 66" className={className}>
    <rect x="34" y="10" width="32" height="46" fill="#fff" />
    <circle cx="47" cy="25" r="10" fill="#333" />
    <path d="M49 15a9 9 0 0 1 9 9h-9Z" fill="#E05A3C" />
    <path d="M38 43h22M38 50h22" stroke="#E05A3C" strokeWidth="3" />
    <path d="m0 7 38-7v66L0 57Z" fill="#E2502E" />
    <text x="9" y="43" fontSize="30" fontWeight="700" fill="#fff" fontFamily="Inter">P</text>
  </Svg>
);
const OneNote = ({ className = "h-[60px] w-16" }: { className?: string }) => (
  <Svg vb="0 0 64 60" className={className}>
    <rect x="14" y="0" width="50" height="59" rx="3" fill="#CB66E8" />
    <path d="M50 15h14v15H50Z" fill="#B14AD8" />
    <path d="M50 30h14v14H50Z" fill="#9332BF" />
    <path d="M50 44h14v15H50Z" fill="#7B1FA2" />
    <rect x="0" y="12" width="32" height="35" rx="3" fill="#7719AA" />
    <text x="7" y="38" fontSize="24" fontWeight="700" fill="#fff" fontFamily="Inter">N</text>
  </Svg>
);

const Badge = ({ children }: Kids) => (
  <div className="absolute -top-[6px] -right-[8px] flex size-7 items-center justify-center rounded-full bg-[#F9423A] text-[18px] text-white">{children}</div>
);

const S64 = ({ children }: Kids) => (
  <Svg vb="0 0 64 64" className="size-16">
    {children}
  </Svg>
);

const apps: { icon: React.ReactNode; on?: boolean }[] = [
  {
    on: true,
    icon: (
      <S64>
        <defs>
          <linearGradient id="fin" x1="0" y1="0" x2="0" y2="1">
            <stop stopColor="#2fd0fb" />
            <stop offset="1" stopColor="#2371ee" />
          </linearGradient>
        </defs>
        <rect x="2" y="4" width="60" height="56" rx="2" fill="#e7eff8" />
        <path d="M4 4h29q-5 13-6 32h8q0 14 3 24H4q-2 0-2-2V6q0-2 2-2Z" fill="url(#fin)" />
        <path d="M18 18v6m28-6v6M14 41q18 14 36 0" stroke="#15212f" strokeWidth="2.400" strokeLinecap="round" />
      </S64>
    ),
  },
  {
    icon: (
      <S64>
        <defs>
          <linearGradient id="lp" x1="0" y1="0" x2="0" y2="1">
            <stop stopColor="#cfe0e8" />
            <stop offset="1" stopColor="#85888a" />
          </linearGradient>
        </defs>
        <circle cx="32" cy="32" r="31" fill="url(#lp)" stroke="#b5babd" strokeWidth="2" />
        <path d="M51 13Q34 14 25 27q-9-1-16 7l11 1q0 6 9 9l3 10q9-7 7-17Q51 28 51 13ZM18 42q-5 2-5 9 7-1 9-6Z" fill="#484c4f" />
        <circle cx="39" cy="26" r="4" fill="#c3ced4" />
      </S64>
    ),
  },
  {
    icon: (
      <S64>
        <defs>
          <linearGradient id="siri" x1="0" y1="0" x2="1" y2="1">
            <stop stopColor="#5b2a86" />
            <stop offset=".4" stopColor="#b52a78" />
            <stop offset=".7" stopColor="#3a3f7c" />
            <stop offset="1" stopColor="#173a4c" />
          </linearGradient>
        </defs>
        <circle cx="32" cy="32" r="32" fill="#dcdce4" />
        <circle cx="32" cy="32" r="29.500" fill="#15163a" />
        <circle cx="32" cy="29" r="24" fill="url(#siri)" />
        <path d="M9 47q15-3 22-17 8 9 24 7-14 3-24-3-8 9-22 13Z" fill="#7df0e6" opacity=".9" />
        <path d="M33 31q-1 15 7 28 2-14-7-28Z" fill="#e77cc4" />
        <path d="M33 30q12 14 22 12-6-11-22-12Z" fill="#35c78e" opacity=".8" />
        <path d="M32 30q-16-3-18-13 17 2 18 13Zm0 0q-1-14 8-18 2 9-8 18Z" fill="#e9a6e0" opacity=".45" />
        <circle cx="32" cy="31" r="3.500" fill="#fff" />
      </S64>
    ),
  },
  { on: true, icon: <Safari /> },
  {
    icon: (
      <S64>
        <circle cx="32" cy="32" r="32" fill="#fff" />
        <g strokeWidth="8.500" strokeLinecap="round">
          <path d="M16 27h11M27 16h.1" stroke="#3FC5F0" />
          <path d="M38 15v12M49 27h.1" stroke="#2EB67D" />
          <path d="M38 38h11M38 48.500h.1" stroke="#ECB22E" />
          <path d="M27 38v11M16 38h.1" stroke="#E01E5A" />
        </g>
      </S64>
    ),
  },
  {
    icon: (
      <div className="flex h-[60px] w-[54px] -rotate-[8deg] flex-col overflow-hidden border-r-4 border-b-[5px] border-l-2 border-[#59626b] bg-white">
        <div className="h-[16px] bg-[#E8504F] text-center text-[12px] leading-4 text-white">APR</div>
        <div className="text-center text-[31px] leading-10 font-light tracking-tighter text-black">21</div>
      </div>
    ),
  },
  {
    icon: (
      <Svg vb="0 0 74 74" className="size-[74px]">
        <path d="M38 6.500A30.500 30.500 0 1 1 17 60" stroke="#49B035" strokeWidth="12" />
        <path d="M17 60A30.500 30.500 0 0 1 34 6.500" stroke="#49B035" strokeWidth="11" strokeDasharray="7 1.500" />
        <path d="M16 64Q-6 36 30 4M20 55Q0 30 36 12" stroke="#8c6e3f" strokeWidth="1.500" />
      </Svg>
    ),
  },
  { on: true, icon: <VsCode /> },
  {
    icon: (
      <Svg vb="0 0 60 68" className="h-[68px] w-[60px]">
        <path d="m4 15 48-6 5 52-48 7Z" fill="#fbfbf6" />
        <path d="m2 8 48-7 1 10-48 7Z" fill="#FFD43A" />
        <path d="m5 24 48-6M6 30l48-6M7 36l47-6M7 42l48-6M8 48l48-6M8 54l48-6M9 60l48-6" stroke="#d5d5cf" />
      </Svg>
    ),
  },
  {
    icon: (
      <Svg vb="0 0 60 68" className="h-[68px] w-[60px]">
        <rect x="6" y="6" width="46" height="58" rx="4" transform="rotate(-8 29 34)" fill="#2e3236" />
        <rect x="4" y="4" width="46" height="57" rx="4" transform="rotate(-8 29 34)" fill="#fbfbfb" />
        <circle cx="11" cy="20" r="4" fill="#FF9426" />
        <circle cx="13" cy="31" r="4" fill="#28A8F5" />
        <circle cx="15" cy="43" r="4" fill="#63D643" />
        <circle cx="17" cy="54" r="4" fill="#C76FE0" />
        <path d="m18 13 26-4M20 24l26-4M21 36l26-4M23 48l26-4" stroke="#ccc" />
      </Svg>
    ),
  },
  {
    icon: (
      <S64>
        <circle cx="32" cy="32" r="32" fill="#f1f1f1" />
        {["#F79A2E", "#F3DF30", "#B8D84A", "#5FBF7C", "#6FB5E0", "#9B86C8", "#D68AB8", "#EE5A4C"].map((c, i) => (
          <rect key={c} x="23.500" y="5" width="17" height="27" rx="8.500" fill={c} opacity=".85" transform={`rotate(${i * 45} 32 32)`} />
        ))}
      </S64>
    ),
  },
  {
    icon: (
      <S64>
        <path d="M32 4c40 0 42 50 0 50q-6 0-9-2-4 6-12 6 5-4 4-9C-10 35 0 4 32 4Z" fill="#2F96F8" />
        <circle cx="43" cy="44" r="19" fill="#eef6fd" />
        <path d="m50 60 6 3-1-8Z" fill="#eef6fd" />
        <g fill="#165a9c">
          <circle cx="34" cy="44" r="3" />
          <circle cx="43" cy="44" r="3" />
          <circle cx="52" cy="44" r="3" />
        </g>
      </S64>
    ),
  },
  {
    icon: (
      <div className="flex size-16 items-center justify-center rounded-full bg-[#191414]">
        <FaSpotify className="size-[65px] shrink-0 text-[#2ED667]" />
      </div>
    ),
  },
  {
    icon: (
      <Svg vb="0 0 72 66" className="h-[66px] w-[72px]">
        <circle cx="32" cy="33" r="32" fill="#F7941E" />
        <circle cx="39" cy="33" r="33" fill="#2C2255" />
        <path d="M7 25h65v4H7Zm0 7h65v4H7Zm0 7h65v4H7Z" fill="#fff" />
      </Svg>
    ),
  },
  {
    icon: (
      <div className="relative">
        <S64>
          <rect x="0" y="6" width="58" height="52" rx="7" fill="#34D653" />
          <rect x="8" y="19" width="28" height="25" rx="5" fill="#fff" />
          <path d="m38 29 10-8v20l-10-7Z" fill="#fff" />
          <circle cx="48" cy="46" r="16" fill="#f3f5f2" />
          <path d="M41 38q-2 4 4 10t11 6l1-4-5-3-3 2q-3-2-4-5l2-2-3-5Z" fill="#34C24A" />
        </S64>
        <Badge>4</Badge>
      </div>
    ),
  },
  {
    icon: (
      <S64>
        <circle cx="32" cy="32" r="32" fill="#dfe4ea" />
        <circle cx="32" cy="32" r="29.500" fill="#1E86F5" />
        <path d="m29 14 20 34M35 14 15 48M12 39h22m8 0h10" stroke="#fff" strokeWidth="5" strokeLinecap="round" />
      </S64>
    ),
  },
  {
    icon: (
      <S64>
        <defs>
          <linearGradient id="itn" x1="0" y1="0" x2="1" y2="1">
            <stop stopColor="#F84C6C" />
            <stop offset=".5" stopColor="#B673F0" />
            <stop offset="1" stopColor="#37B8F5" />
          </linearGradient>
        </defs>
        <circle cx="32" cy="32" r="30.500" fill="#f7f4f8" stroke="url(#itn)" strokeWidth="3" />
        <path d="M25 46V17l20-4v30" stroke="url(#itn)" strokeWidth="4" />
        <path d="M25 20l20-4" stroke="#F2547D" strokeWidth="5" />
        <ellipse cx="20" cy="47" rx="6" ry="5" fill="#9C68F0" />
        <ellipse cx="40" cy="43" rx="6" ry="5" fill="#4AA6F2" />
      </S64>
    ),
  },
  {
    icon: (
      <div className="relative">
        <S64>
          <rect x="0" y="3" width="64" height="58" rx="3" fill="#93999e" />
          <circle cx="32" cy="32" r="25" fill="#2b2b2b" />
          <circle cx="32" cy="32" r="20" stroke="#9b9b9b" strokeWidth="5" />
          <circle cx="32" cy="32" r="23.500" stroke="#9b9b9b" strokeWidth="3" strokeDasharray="2.500 2" />
          <path d="M32 32V50M32 32 16 23m16 9 16-9" stroke="#9b9b9b" strokeWidth="4" transform="rotate(30 32 32)" />
          <circle cx="32" cy="32" r="6" fill="#9b9b9b" />
        </S64>
        <Badge>1</Badge>
      </div>
    ),
  },
];

const apps2: React.ReactNode[] = [
  <Svg vb="0 0 66 66" className="size-[66px]">
    <path d="M33 33 4.400 16.500A33 33 0 0 1 61.600 16.500Z" fill="#D94A42" />
    <path d="M33 33 33 66A33 33 0 0 1 4.400 16.500Z" fill="#2AA15C" />
    <path d="M33 33 61.600 16.500A33 33 0 0 1 33 66Z" fill="#FCCB4D" />
    <path d="M33 16.500h28.600L47 33Z" fill="#D94A42" />
    <path d="M4.400 16.500 18.700 41 33 33Z" fill="#2AA15C" />
    <path d="M33 66 47.300 41 33 33Z" fill="#FCCB4D" />
    <circle cx="33" cy="33" r="15.500" fill="#fff" />
    <circle cx="33" cy="33" r="12.500" fill="#4B8AF4" />
  </Svg>,
  <Acrobat />,
  <PowerPoint />,
  <Svg vb="0 0 66 70" className="h-[70px] w-[66px]">
    <path d="m33 2 29 15v36L33 68 4 53V17Z" fill="#fff" stroke="#8E52D8" strokeWidth="4" strokeLinejoin="round" />
    <path d="m42 13 13 6v32l-13 6L22 38l-7 6-5-3V29l5-3 7 6Zm0 14L30 35l12 9ZM14 31v8l4-4Z" fill="#7442BE" fillRule="evenodd" />
  </Svg>,
  <div className="size-16 pt-[3px]">
    <div className="h-[57px] w-16 rounded-[4px] border-2 border-[#0a0a0a] bg-[#222] pl-[6px] font-['Liberation_Mono',monospace] text-[17px] font-bold text-white outline-1 outline-[#777]">&gt;_</div>
  </div>,
  <OneNote />,
  <Svg vb="0 0 66 66" className="size-[66px]">
    <rect x="32" y="8" width="34" height="50" fill="#fff" />
    <path d="M38 15h22M38 22h22M38 29h22M38 36h22M38 43h22M38 50h22" stroke="#333e50" strokeWidth="3" />
    <path d="M44 15h8M38 29h8M44 43h8" stroke="#5f9be0" strokeWidth="3" />
    <path d="m0 7 38-7v66L0 58Z" fill="#2B63B4" />
    <text x="6" y="42" fontSize="25" fontWeight="700" fill="#fff" fontFamily="Inter">W</text>
  </Svg>,
  <Svg vb="0 0 54 54" className="size-[54px]">
    <rect width="54" height="54" fill="#45D98B" />
    <path d="M30 0h24v24Z" fill="#21C8E8" />
    <path d="M54 14v40H0l8-16Z" fill="#EDF04B" />
    <rect x="6" y="6" width="42" height="42" fill="#000" />
    <text x="8" y="30" fontSize="25" fontWeight="700" fill="#fff" fontFamily="Inter" textLength="36">PC</text>
    <path d="M11 41h15" stroke="#fff" strokeWidth="3" />
  </Svg>,
];

function Mini({ bar, bg = "#fff", badge, lines }: { bar: string; bg?: string; badge: React.ReactNode; lines: React.ReactNode }) {
  return (
    <div className="relative mt-[2px]">
      <Svg vb="0 0 70 50" className="h-[39px] w-[70px]">
        <rect width="70" height="50" fill={bg} />
        <rect width="70" height="3" fill={bar} />
        {lines}
      </Svg>
      <div className="absolute -right-px -bottom-[14px]">{badge}</div>
    </div>
  );
}

const ppt = <PowerPoint className="h-[25px] w-[25px]" />;

const minis: React.ReactNode[] = [
  <Svg vb="0 0 62 88" className="h-[69px] w-[62px]">
    <path d="M6 0h28l4 6h17v8H6Z" fill="#e6e6e6" />
    <rect y="10" width="62" height="78" rx="2" fill="#ececec" />
    <rect x="4" y="22" width="54" height="52" fill="#c9c9c7" stroke="#888" />
    <path d="M20 27h22M8 31h44M14 43h34M17 51h28M22 59h18" stroke="#555" strokeWidth="1.500" />
    <path d="M8 38h14v26H8Z" fill="#dd8a7a" opacity=".35" />
  </Svg>,
  <Mini bar="#333" badge={<Acrobat className="h-[25px] w-[26px]" />} lines={<><path d="M0 0h2v50H0ZM66 0h4v50h-4ZM0 0h70v6H0Z" fill="#3c3c40" /><path d="M5 12h30" stroke="#4444dd" strokeWidth="3" /><path d="M5 20h30M5 23h8" stroke="#333" /><path d="M7 29h32M9 33h34" stroke="#5fbf7f" /><path d="m53 18 8 7-2 10H47l-2-10Z" stroke="#5f87b5" /></>} />,
  <Mini bar="#9b59c9" badge={<OneNote className="h-[22px] w-6" />} lines={<><path d="M0 3h70v5H0Z" fill="#eee" /><path d="M16 12h20M18 17h18M18 19h14" stroke="#8f8fe0" /><path d="M20 27h16M20 32h22M22 37h20M20 43h18" stroke="#bbb" /><path d="M2 10h8M2 16h7M2 22h8M2 28h6M2 34h8" stroke="#d3a8cf" /></>} />,
  <Mini bar="#222" badge={<Safari className="size-6" />} lines={<><path d="M7 9h6v6H7Z" fill="#F5B041" /><path d="M14 9h6v6h-6Z" fill="#3C8FE0" /><path d="M21 9h6v6h-6Z" fill="#4CB050" /><path d="M28 9h6v6h-6Z" fill="#A05FC9" /><path d="M51 8h12v12H51Z" fill="#B5232B" /><circle cx="57" cy="32" r="4" fill="#3C8FC0" /><path d="M7 19h14" stroke="#f08040" /><path d="M10 28h20M10 33h20M10 38h20M10 43h18" stroke="#9cc9ec" /></>} />,
  <Mini bar="#3a3a3a" bg="#202327" badge={<VsCode className="size-6" />} lines={<><path d="M0 48h70v2H0Z" fill="#2a6fb0" /><path d="M0 3h3v45H0Z" fill="#333" /><path d="M4 10h7M4 14h6M4 18h7M18 14h8M18 24h8M18 28h7M18 37h8M44 12h8M44 20h12M44 28h8" stroke="#46566a" /></>} />,
  <Mini bar="#D24726" badge={ppt} lines={<><path d="M0 3h70v5H0Z" fill="#f3ebe9" /><path d="M15 8h55v37H15Z" fill="#e5e5e5" /><path d="M23 10h37v32H23Z" fill="#fff" /><path d="M26 14h14M27 20h24M27 24h20M28 28h22" stroke="#999" /><path d="M27 37h30" stroke="#d9b86a" strokeDasharray="5 2" strokeWidth="2" /></>} />,
  <Mini bar="#D24726" badge={ppt} lines={<><path d="M0 3h70v5H0Z" fill="#f3ebe9" /><path d="M2 12h8v5H2ZM2 30h8v6H2Z" fill="#5b2b20" /><path d="M2 21h8v6H2Z" stroke="#d24726" /><path d="M24 8h33v5H24Z" fill="#111" /><path d="M27 17h20M27 21h16M27 25h14" stroke="#888" /><path d="M29 29h24M29 32h18" stroke="#7fb9dd" /></>} />,
  <Svg vb="0 0 54 88" className="h-[70px] w-[54px]">
    <defs>
      <linearGradient id="bin" x1="0" x2="1" y1="0" y2="0">
        <stop stopColor="#33383c" />
        <stop offset=".45" stopColor="#767c81" />
        <stop offset="1" stopColor="#2c3033" />
      </linearGradient>
    </defs>
    <path d="m3 14 8-11 8 5 8-6 8 6 8-3 7 10-8 8H10Z" fill="#d9dadb" />
    <path d="m12 6 6 10m4-8 8 8m4-8-4 10m12-9-5 8" stroke="#444" strokeWidth="2" />
    <path d="M24 6h6v4h-6Z" fill="#5ab7d6" />
    <path d="M0 14q27 12 54 0l-8 66q-1 7-19 7T8 80Z" fill="url(#bin)" />
    <ellipse cx="27" cy="14" rx="26.500" ry="6" stroke="#8a8f93" strokeWidth="1.500" />
  </Svg>,
];

const Slot = ({ children, on = false }: Kids & { on?: boolean }) => (
  <div className="flex w-[78.800px] shrink-0 flex-col items-center">
    <div className="flex h-[86px] items-center">{children}</div>
    {on && <div className="-mt-px size-2 rounded-full bg-[#FFF6C4]" />}
  </div>
);

const Divider = () => (
  <div className="flex w-[34.600px] shrink-0 justify-center pt-4">
    <div className="h-[60px] w-[2px] bg-[#c8aa78]" />
  </div>
);

function Dock() {
  return (
    <div className="ml-[60px] flex h-[94px] w-[2762px] rounded-t-[10px] border-t-2 border-r-2 border-l-2 border-[#a98b5c]/70 bg-[linear-gradient(90deg,#8f7140_0,#8c6e3e_30%,#94723f_50%,#9a7b4a_72%,#907650_80%,#57524a_85%,#4a4a49_90%,#4a4a4a_100%)] pl-1 outline-1 outline-black/50">
      {apps.map((a, i) => (
        <Slot key={i} on={a.on}>{a.icon}</Slot>
      ))}
      <Divider />
      {apps2.map((a, i) => (
        <Slot key={i} on>{a}</Slot>
      ))}
      <Divider />
      {minis.map((a, i) => (
        <Slot key={i}>{a}</Slot>
      ))}
    </div>
  );
}

export default function App() {
  return (
    <div className="flex h-[1744px] w-[2880px] flex-col overflow-hidden bg-[linear-gradient(90deg,#d8b46c_0,#c9a55f_60px,#6b5533_160px,#5f4d31_50%,#665742_68%,#3c3b38_76%,#3a3b3b_96%,#5a5b5b_100%)] font-['Inter',sans-serif] leading-normal">
      <div className="relative flex h-[1643px] shrink-0 flex-col overflow-hidden rounded-b-[12px] border-b border-black">
        <TabStrip />
        <Toolbar />
        <BookmarksBar />
        <Kibana />
        <div className="pointer-events-none absolute inset-x-0 bottom-0 z-20 h-24 bg-[linear-gradient(to_bottom,transparent,rgba(0,0,0,0.07))]" />
      </div>
      <div className="h-[7px] shrink-0" />
      <Dock />
    </div>
  );
}
